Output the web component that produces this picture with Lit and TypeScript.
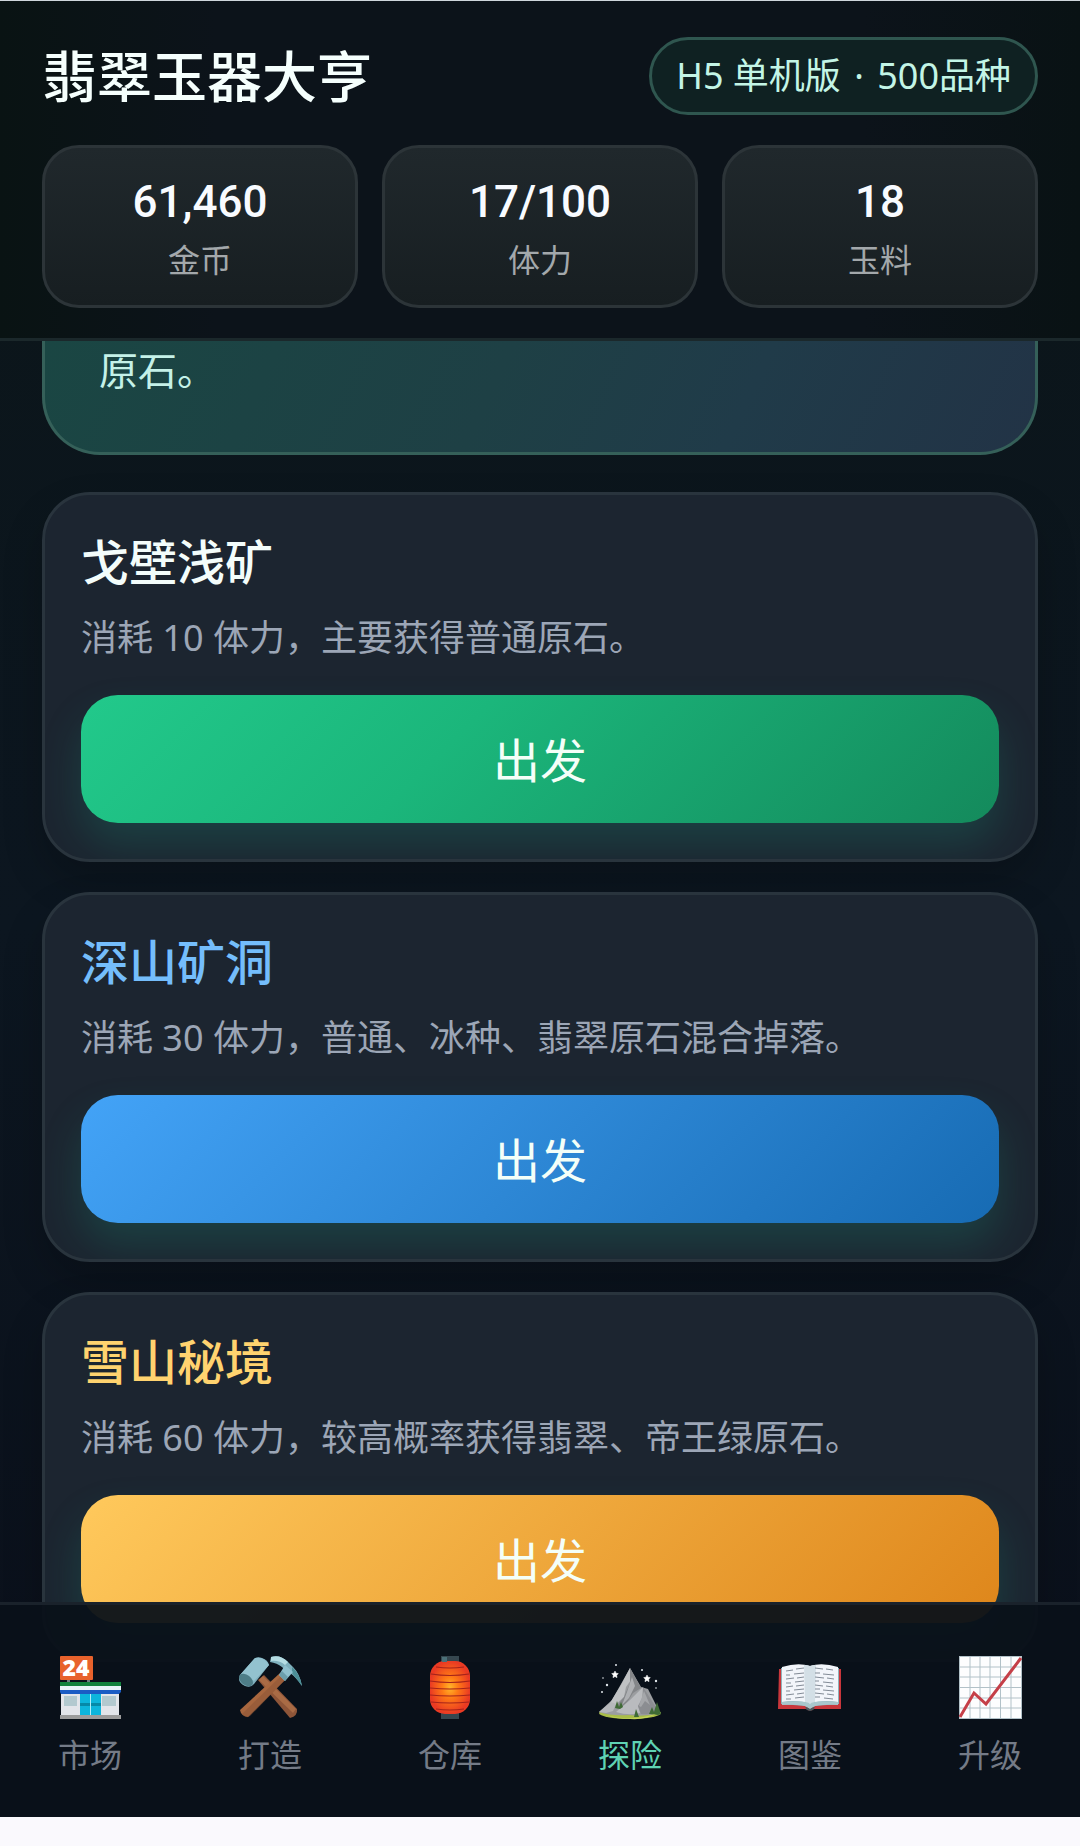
import { html, css, svg, LitElement } from 'lit'
import { customElement, property, state } from 'lit/decorators.js'
import { classMap } from 'lit/directives/class-map.js'

const icons = {
    market: svg`
        <rect x="9" y="23" width="3" height="5" fill="#6d7a80" />
        <rect x="29" y="23" width="3" height="5" fill="#6d7a80" />
        <rect x="2" y="1" width="33" height="24" rx="1" fill="#e8622c" />
        <text x="18" y="21" text-anchor="middle" font-family="Open Sans, sans-serif" font-size="23" font-weight="800" fill="#fff">24</text>
        <rect x="3" y="37" width="58" height="23" fill="#e3e5ea" />
        <rect x="2" y="27" width="61" height="4" fill="#11823c" />
        <rect x="2" y="31" width="61" height="4" fill="#e8f4f8" />
        <path d="M2 35h61v2l-2 2H3l-1-2z" fill="#1b5cc4" />
        <rect x="6" y="41" width="13" height="10" fill="#b3c9cf" />
        <rect x="44" y="41" width="14" height="10" fill="#b3c9cf" />
        <rect x="22" y="39" width="21" height="21" fill="#0db5dc" />
        <rect x="22" y="48" width="21" height="3" fill="#0689a8" />
        <rect x="32" y="39" width="1" height="21" fill="#b5eefa" />
        <rect x="2" y="60" width="61" height="4" fill="#9c9c9c" />`,
    forge: svg`
        <path d="M20 25l6-5 33 34q1 7-7 9z" fill="#8e5538" />
        <path d="M21 25l4-4 33 33-3 4z" fill="#a96b45" />
        <path d="M42 18l6 6L10 62q-7-1-8-7z" fill="#a8673f" />
        <path d="M48 24L12 61q-4 3-8-2l40-39z" fill="#8f5737" opacity=".6" />
        <path d="M33 2q9-3 17 5l5 5q7 7 9 19-8-12-17-16l-3-3q-5-4-12-5z" fill="#7fb0bd" />
        <path d="M33 2q9-3 17 5l-3 3Q41 5 33 6z" fill="#b4dce2" />
        <path d="M54 12q8 7 10 19l-10-13z" fill="#4c8f97" />
        <path d="M47 10l8 7-8 9-6-6z" fill="#8fc0ce" />
        <path d="M41 20l3-4 6 6-3 4z" fill="#6b9eac" />
        <path d="M2 20L16 4q3-3 8-1 6 2 7 7L16 29q-3 4-9 2-6-3-6-7z" fill="#7eaebc" />
        <path d="M2 20L17 3q9-2 14 7L16 26Q6 17 2 20z" fill="#93c2cf" />
        <ellipse cx="8" cy="25" rx="8" ry="5" transform="rotate(38 8 25)" fill="#4e7d87" />`,
    storage: svg`
        <rect x="23" y="1" width="18" height="8" fill="#36474f" />
        <rect x="23" y="56" width="18" height="8" fill="#36474f" />
        <rect x="12" y="6" width="40" height="53" rx="15" fill="url(#glow)" />
        <path d="M18 12q14 2 28 0M13 19q19 3 38 0M12 26q20 3 40 0M12 33q20 2 40 0M12 40q20 2 40 0M13 47q19 2 38 0M18 54q14 2 28 0" fill="none" stroke="#a5231b" stroke-width="1.2" />
        <rect x="24" y="2" width="5" height="5" fill="#4b7078" />`,
    explore: svg`
        <ellipse cx="32" cy="58" rx="31" ry="6" fill="#a9bd48" />
        <path d="M1 57l13-12L32 13l11 19 7 2 12 24q-16 4-31 2-18 1-30-3z" fill="#9b9da0" />
        <path d="M32 13l-9 17-8 13-7 12 9-5 9-8 2-10 5-7z" fill="#c0c2c4" />
        <path d="M32 13l11 20-8 5-5 8-8 8-5-1 9-11 6-14z" fill="#848689" />
        <path d="M34 22l3 9-6 12-7 7 5-13z" fill="#aeb0b3" />
        <path d="M45 32L32 45 18 57q13 4 24 1l-2-7 4-8z" fill="#b9bbbe" />
        <path d="M45 32l16 25q-9 3-18 2l-3-8 5-7z" fill="#8b8d91" />
        <path d="M46 36l6 14-5-4-4 6-2-1z" fill="#a5a7aa" />
        <path d="M1 57l12-10 5 2-3 7-7 2z" fill="#b6b8bb" />
        <path d="M17 53l2-7 2 6 2-5 2 5-3 2zM36 62l2-8 3 8zM51 59l3-7 2 5 3-10 4 12-3 1z" fill="#3f6b35" />
        <path d="M9 60q22 7 49-1-10 6-26 5-16 0-23-4z" fill="#c3d458" />
        <path d="M17 16l1 2.200 2.300.4-1.600 1.700.3 2.400-2-1.200-2 1.200.3-2.400-1.600-1.700 2.300-.4zM49 20l1 2.200 2.300.4-1.600 1.700.3 2.400-2-1.200-2 1.200.3-2.400-1.600-1.700 2.300-.4z" fill="#fff" stroke="#fff" stroke-width=".5" />
        <g fill="#dfe5ea">
            <circle cx="18" cy="10" r="1" />
            <circle cx="44" cy="15" r="1" />
            <circle cx="5" cy="23" r=".8" />
            <circle cx="9" cy="30" r="1.2" />
            <circle cx="4" cy="37" r="1" />
            <circle cx="58" cy="26" r="1.2" />
            <circle cx="58" cy="33" r=".8" />
        </g>`,
    atlas: svg`
        <path d="M1 14h62v40H36q-4 3-8 0H0z" fill="#c9363b" />
        <path d="M3 13l29-2 29 2v36l-24 2-5 3-5-3-24-2z" fill="#8fb3ba" />
        <path d="M4 12q16-5 28-1v38q-12-5-28-2z" fill="#f2f5fa" />
        <path d="M60 12q-16-5-28-1v38q12-5 28-2z" fill="#f2f5fa" />
        <path d="M26 10q4 0 6 1v38l-5-2zM38 10q-4 0-6 1v38l5-2z" fill="#d3dfe6" />
        <path d="M32 49q-3-4-28-2v3q21-1 25 2l3 2 3-2q4-3 25-2v-3q-25-2-28 2z" fill="#a9c6cc" />
        <path d="M8 16l7-1m3-1l8-1M8 20h4m4-1l10-1M8 24l8-1m3 0l7-1M8 28h5m4-1l9-1M8 32l7-1m3 0l8-1M8 36h4m4-1l10-1M8 40l8-1m3 0l7-1M8 44h5m4-1l9-1M37 13l8 1m3 0l7 1M37 18h5m3 1l11 1M37 22l9 1m3 0l7 1M37 26h4m4 1l10 1M37 30l8 1m3 0l7 1M37 34h5m3 1l11 1M37 38l9 1m3 0l7 1M37 42h5m4 1l9 1" fill="none" stroke="#828b96" stroke-width="1" />
        <path d="M27 52q2 0 5 2 3-2 5-2l-2 3-3 1-3-1z" fill="#47585d" />`,
    upgrade: svg`
        <rect x="1" y="1" width="63" height="63" fill="#fdfdfe" />
        <path d="M1.500 1v63M12 1v63M22 1v63M32 1v63M42.500 1v63M53 1v63M63.500 1v63M1 1.500h63M1 12h63M1 22h63M1 32.500h63M1 43h63M1 53h63M1 63.500h63" fill="none" stroke="#b2c1c8" stroke-width="1" />
        <path d="M2 62L16 38l12 11L63 3" fill="none" stroke="#c53f48" stroke-width="3" />`
}

@customElement('stat-box')
class StatBox extends LitElement {
    @property() value = ''
    @property() label = ''

    render() {
        return html`
            <div class="value">${this.value}</div>
            <div class="label">${this.label}</div>
        `
    }

    static styles = css`
        :host {
            display: flex;
            flex-direction: column;
            align-items: center;
            gap: 8px;
            padding: 25px 12px;
            border: 3px solid #2c3438;
            border-radius: 37px;
            background: linear-gradient(180deg, #20282c, #171e21);
        }

        .value {
            color: #f8fbff;
            font-family: Roboto, sans-serif;
            font-size: 44px;
            line-height: 58px;
            font-weight: 500;
        }

        .label {
            color: #a3a8ab;
            font-size: 32px;
            line-height: 41px;
        }
    `
}

@customElement('mine-card')
class MineCard extends LitElement {
    @property() name = ''
    @property() text = ''
    @property() tone = 'green'

    render() {
        return html`
            <h2 class="title ${this.tone}">${this.name}</h2>
            <p class="text">${this.text}</p>
            <button class="go ${this.tone}" type="button">出发</button>
        `
    }

    static styles = css`
        :host {
            display: flex;
            flex-direction: column;
            padding: 36px;
            border: 3px solid #29343d;
            border-radius: 48px;
            background: #1c2530;
            box-shadow: 0 20px 40px rgba(0, 0, 0, 0.2);
            overflow: hidden;
        }

        .title {
            margin: 0 0 18px;
            font-size: 48px;
            line-height: 62px;
            font-weight: 500;
        }

        .title.green {
            color: #f3fdfb;
        }

        .title.blue {
            color: #74bdfb;
        }

        .title.gold {
            color: #ffd36f;
        }

        .text {
            margin: 0 0 30px;
            color: #9ca6b6;
            font-size: 36px;
            line-height: 54px;
        }

        .go {
            height: 128px;
            padding: 0 0 4px;
            border: 0;
            border-radius: 37px;
            color: #f4fff8;
            font-family: inherit;
            font-size: 47px;
            box-shadow: 0 22px 40px rgba(26, 160, 130, 0.22);
            cursor: pointer;
        }

        .go.green {
            background: linear-gradient(135deg, #22c98b, #1bb67b 40%, #148a5c);
        }

        .go.blue {
            background: linear-gradient(135deg, #43a3f7, #176bb3);
        }

        .go.gold {
            background: linear-gradient(135deg, #ffc95c, #de861b);
        }
    `
}

@customElement('app-root')
class AppRoot extends LitElement {
    @state() active = 'explore'

    stats = [
        { value: '61,460', label: '金币' },
        { value: '17/100', label: '体力' },
        { value: '18', label: '玉料' }
    ]

    mines = [
        { name: '戈壁浅矿', text: '消耗 10 体力，主要获得普通原石。', tone: 'green' },
        { name: '深山矿洞', text: '消耗 30 体力，普通、冰种、翡翠原石混合掉落。', tone: 'blue' },
        { name: '雪山秘境', text: '消耗 60 体力，较高概率获得翡翠、帝王绿原石。', tone: 'gold' }
    ]

    tabs = [
        { id: 'market', label: '市场' },
        { id: 'forge', label: '打造' },
        { id: 'storage', label: '仓库' },
        { id: 'explore', label: '探险' },
        { id: 'atlas', label: '图鉴' },
        { id: 'upgrade', label: '升级' }
    ]

    renderTab(tab) {
        return html`
            <button
                type="button"
                class=${classMap({ tab: true, active: tab.id === this.active })}
                @click=${() => (this.active = tab.id)}
            >
                <svg class="icon" viewBox="0 0 64 64" aria-hidden="true">
                    <defs>
                        <radialGradient id="glow">
                            <stop offset="0" stop-color="#ffb629" />
                            <stop offset=".4" stop-color="#ff7a16" />
                            <stop offset="1" stop-color="#ea3a23" />
                        </radialGradient>
                    </defs>
                    ${icons[tab.id]}
                </svg>
                ${tab.label}
            </button>
        `
    }

    render() {
        return html`
            <header class="header">
                <div class="brand">
                    <h1 class="name">翡翠玉器大亨</h1>
                    <span class="badge">H5 单机版 <span class="dot">·</span> 500品种</span>
                </div>
                <div class="stats">
                    ${this.stats.map((s) => html`<stat-box .value=${s.value} .label=${s.label}></stat-box>`)}
                </div>
            </header>
            <main class="content">
                <section class="hero">原石。</section>
                <div class="mines">
                    ${this.mines.map(
                        (m) => html`<mine-card .name=${m.name} .text=${m.text} .tone=${m.tone}></mine-card>`
                    )}
                </div>
            </main>
            <nav class="tabs">${this.tabs.map((t) => this.renderTab(t))}</nav>
            <div class="system-bar"></div>
        `
    }

    static styles = css`
        :host {
            display: grid;
            grid-template-columns: minmax(0, 1fr);
            grid-template-rows: auto minmax(0, 1fr) auto auto;
            box-sizing: border-box;
            height: 100vh;
            overflow: hidden;
            border-top: 1px solid #cfd6dc;
            background: linear-gradient(180deg, #0b1518, #0c1620 50%, #0a0f1a);
            font-family: 'Noto Sans', 'Noto Sans CJK SC', sans-serif;
        }

        .header {
            display: flex;
            flex-direction: column;
            gap: 30px;
            padding: 36px 42px 30px;
            border-bottom: 3px solid #1b282b;
            background: linear-gradient(90deg, #091313, #0c131a 20%, #0c131a 80%, #091214);
        }

        .brand {
            display: flex;
            align-items: center;
            justify-content: space-between;
        }

        .name {
            margin: 0;
            color: #f5fffd;
            font-size: 55px;
            line-height: 72px;
            font-weight: 500;
        }

        .badge {
            padding: 0 24px;
            border: 3px solid #2f564f;
            border-radius: 39px;
            background: #0f2122;
            color: #c3f5e6;
            font-size: 36px;
            line-height: 72px;
        }

        .dot {
            margin: 0 4px;
        }

        .stats {
            display: grid;
            grid-template-columns: repeat(3, minmax(0, 1fr));
            gap: 24px;
        }

        .content {
            grid-row: 2 / 4;
            grid-column: 1;
            min-height: 0;
            overflow: hidden;
            padding: 0 42px;
        }

        .hero {
            padding: 0 54px 53px;
            border: 3px solid #356059;
            border-top: 0;
            border-radius: 0 0 58px 58px;
            background: linear-gradient(115deg, #1a4643, #1e4045 45%, #203b49 70%, #223346);
            color: #c4f1e8;
            font-size: 39px;
            line-height: 58px;
        }

        .mines {
            display: flex;
            flex-direction: column;
            gap: 30px;
            margin-top: 37px;
        }

        .tabs {
            grid-row: 3;
            grid-column: 1;
            z-index: 1;
            display: grid;
            grid-template-columns: repeat(6, minmax(0, 1fr));
            padding: 50px 0 38px;
            border-top: 3px solid #1a222b;
            background: rgba(10, 17, 25, 0.95);
        }

        .tab {
            display: flex;
            flex-direction: column;
            align-items: center;
            gap: 12px;
            padding: 0;
            border: 0;
            background: none;
            color: #747b87;
            font-family: inherit;
            font-size: 32px;
            line-height: 48px;
            cursor: pointer;
        }

        .tab.active {
            color: #5fd3b4;
        }

        .icon {
            width: 64px;
            height: 64px;
            overflow: visible;
        }

        .system-bar {
            grid-row: 4;
            height: 29px;
            background: #faf9fd;
        }
    `
}
